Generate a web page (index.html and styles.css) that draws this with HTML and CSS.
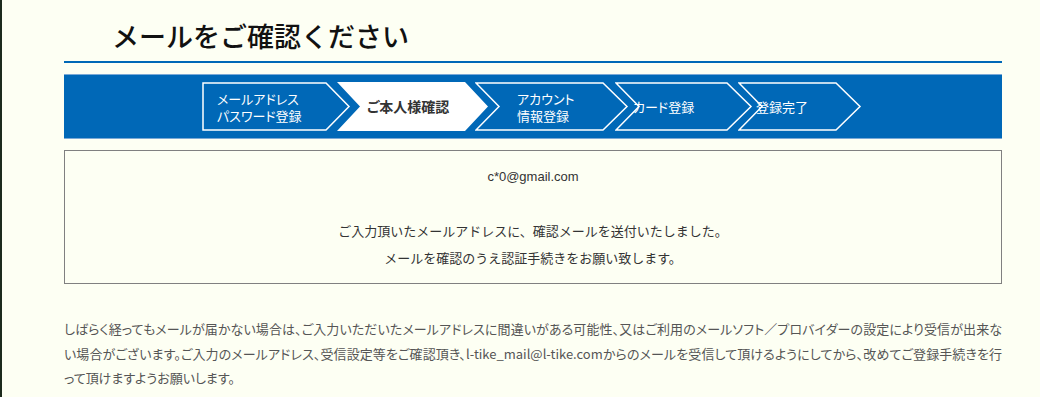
FILE: index.html
```html
<!DOCTYPE html>
<html lang="ja">

<head>
    <meta charset="UTF-8">
    <meta name="viewport" content="width=device-width, initial-scale=1.0">
    <title>メールをご確認ください</title>
    <link rel="stylesheet" href="styles.css">
</head>

<body>
    <div class="container">
        <div class="page-head">
            <h1>メールをご確認ください</h1>
        </div>

        <!-- registration steps -->
        <div class="steps">
            <div class="step step1">
                <svg width="149" height="49" viewBox="0 0 149 49">
                    <polygon points="1,1 124,1 147,24.5 124,48 1,48" />
                </svg>
                <span class="step-text">メールアドレス<br>パスワード登録</span>
            </div>
            <div class="step step2 current">
                <svg width="152" height="49" viewBox="0 0 152 49">
                    <polygon points="0,0 128,0 151,24.5 128,49 0,49 23,24.5" />
                </svg>
                <span class="step-text">ご本人様確認</span>
            </div>
            <div class="step step3">
                <svg width="154" height="49" viewBox="0 0 154 49">
                    <polygon points="1,1 128,1 152,24.5 128,48 1,48 24,24.5" />
                </svg>
                <span class="step-text">アカウント<br>情報登録</span>
            </div>
            <div class="step step4">
                <svg width="138" height="49" viewBox="0 0 138 49">
                    <polygon points="1,1 112,1 136,24.5 112,48 1,48 24,24.5" />
                </svg>
                <span class="step-text">カード登録</span>
            </div>
            <div class="step step5">
                <svg width="124" height="49" viewBox="0 0 124 49">
                    <polygon points="1,1 98,1 122,24.5 98,48 1,48 24,24.5" />
                </svg>
                <span class="step-text">登録完了</span>
            </div>
        </div>

        <div class="mail-box">
            <p class="mail-address">c*0@gmail.com</p>
            <p class="mail-msg">ご入力頂いたメールアドレスに、確認メールを送付いたしました。<br>メールを確認のうえ認証手続きをお願い致します。</p>
        </div>

        <p class="notice">しばらく経ってもメールが届かない場合は、ご入力いただいたメールアドレスに間違いがある可能性、又はご利用のメールソフト／プロバイダーの設定により受信が出来ない場合がございます。ご入力のメールアドレス、受信設定等をご確認頂き、l-tike_mail@l-tike.comからのメールを受信して頂けるようにしてから、改めてご登録手続きを行って頂けますようお願いします。</p>
    </div>
</body>
</html>
```

FILE: styles.css
```css
html {
    background-color: #fdfff3;
}

body {
    margin: 0;
    min-height: 397px;
    border-left: 2px solid #1c2a1c;
    font-family: "Noto Sans CJK JP", "Liberation Sans", sans-serif;
    color: #333;
}

.container {
    width: 938px;
    margin-left: 62px;
}

.page-head {
    padding: 16px 0 5px 48px;
    border-bottom: 2px solid #0068b7;
}

h1 {
    margin: 0;
    font-size: 27px;
    line-height: 40px;
    font-weight: 500;
    color: #111;
}

.steps {
    margin-top: 11px;
    display: flex;
    padding: 7px 0 7px 138px;
    background-color: #0068b7;
    border-top: 1px solid #7aa9d6;
    border-bottom: 1px solid #7aa9d6;
}

.step {
    display: grid;
    align-items: center;
    height: 49px;
    margin-left: -14px;
    color: #fff;
}

.step svg,
.step-text {
    grid-area: 1 / 1;
}

.step svg {
    display: block;
}

.step polygon {
    fill: none;
    stroke: #fff;
    stroke-width: 1.5;
}

.step-text {
    font-size: 13px;
    line-height: 17px;
    font-feature-settings: "palt";
    white-space: nowrap;
}

.step1 {
    margin-left: 0;
}

.step1 .step-text {
    padding-left: 15px;
}

.step2 .step-text {
    padding-left: 30px;
}

.step3 .step-text {
    padding-left: 42px;
}

.step4 .step-text,
.step5 .step-text {
    padding-left: 18px;
}

.step5 {
    margin-left: -15px;
}

.current {
    color: #333;
}

.current polygon {
    fill: #fff;
    stroke: none;
}

.current .step-text {
    font-size: 14px;
    font-weight: bold;
}

.mail-box {
    margin-top: 11px;
    border: 1px solid #808080;
    padding: 16px 0 12px;
    text-align: center;
    font-size: 13px;
}

.mail-box p {
    margin: 0;
}

.mail-address {
    line-height: 20px;
    font-family: "Liberation Sans", sans-serif;
}

.mail-msg {
    margin-top: 30px !important;
    line-height: 27px;
}

.notice {
    margin: 33px 0 0;
    font-size: 13px;
    line-height: 24.5px;
    color: #555;
    text-align: justify;
    font-feature-settings: "palt";
}
```
